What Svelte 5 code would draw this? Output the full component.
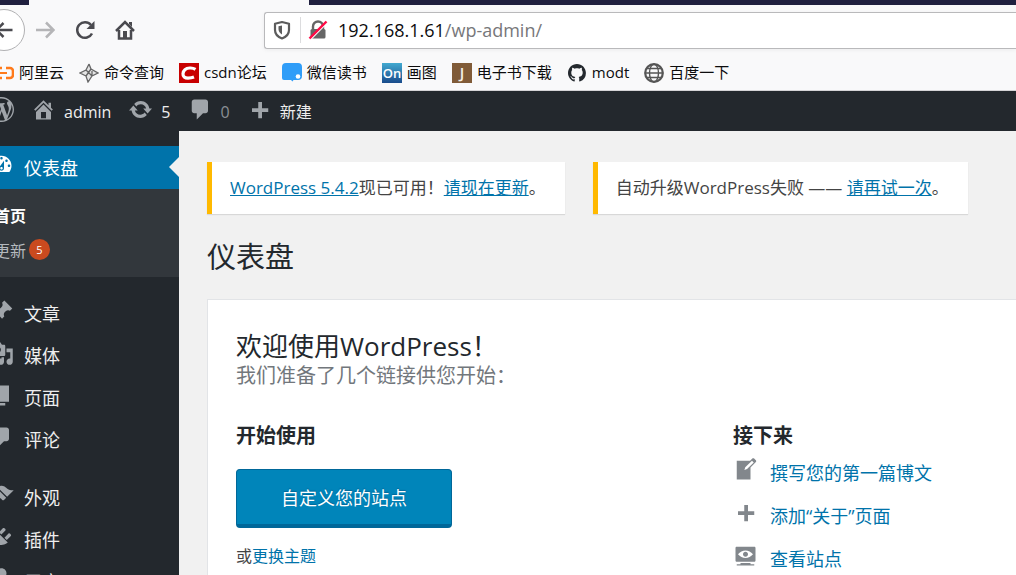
<script>
  const icons = {
    wordpress: 'M20 10c0-5.51-4.49-10-10-10C4.48 0 0 4.49 0 10c0 5.52 4.48 10 10 10 5.51 0 10-4.48 10-10zM7.78 15.37L4.37 6.22c.55-.02 1.17-.08 1.17-.08.5-.06.44-1.13-.06-1.11 0 0-1.45.11-2.37.11-.18 0-.37 0-.58-.01C4.12 2.69 6.87 1.11 10 1.11c2.33 0 4.45.87 6.05 2.34-.68-.11-1.65.39-1.65 1.58 0 .74.45 1.36.9 2.1.35.61.55 1.36.55 2.46 0 1.49-1.4 5-1.4 5l-3.03-8.37c.54-.02.82-.17.82-.17.5-.05.44-1.25-.06-1.22 0 0-1.44.12-2.38.12-.87 0-2.33-.12-2.33-.12-.5-.03-.56 1.2-.06 1.22l.92.08 1.26 3.41zM17.41 10c.24-.64.74-1.87.43-4.25.7 1.29 1.05 2.71 1.05 4.25 0 3.29-1.73 6.24-4.4 7.78.97-2.59 1.94-5.2 2.92-7.78zM6.1 18.09C3.12 16.65 1.11 13.53 1.11 10c0-1.3.23-2.48.72-3.59C3.25 10.3 4.67 14.2 6.1 18.09zm4.03-6.63l2.58 6.98c-.86.29-1.76.45-2.71.45-.79 0-1.57-.11-2.29-.33.81-2.38 1.62-4.74 2.42-7.1z',
    home: 'M16 8.5l1.53 1.53-1.06 1.06L10 4.6l-6.47 6.49-1.06-1.06L10 2.5l4 4v-2h2v4zm-6-2.46l6 5.99V18H4v-5.97zM12 17v-5H8v5h4z',
    update: 'M10.2 3.28c3.53 0 6.43 2.61 6.92 6h2.08l-3.5 4-3.5-4h2.32c-.45-1.97-2.21-3.45-4.32-3.45-1.45 0-2.73.71-3.54 1.78L4.95 5.66C6.23 4.2 8.11 3.28 10.2 3.28zm-.4 13.44c-3.52 0-6.43-2.61-6.92-6H.8l3.5-4c1.17 1.33 2.33 2.67 3.5 4H5.48c.45 1.97 2.21 3.45 4.32 3.45 1.45 0 2.73-.71 3.54-1.78l1.71 1.95c-1.28 1.46-3.15 2.38-5.25 2.38z',
    comments: 'M5 2h9c1.1 0 2 .9 2 2v7c0 1.1-.9 2-2 2h-2l-5 5v-5H5c-1.1 0-2-.9-2-2V4c0-1.1.9-2 2-2z',
    plus: 'M17 9v3h-5v5H9v-5H4V9h5V4h3v5h5z',
    dashboard: 'M3.76 16h12.48c1.1-1.37 1.76-3.11 1.76-5 0-4.42-3.58-8-8-8s-8 3.58-8 8c0 1.89.66 3.63 1.76 5zM10 4c.55 0 1 .45 1 1s-.45 1-1 1-1-.45-1-1 .45-1 1-1zM6 6c.55 0 1 .45 1 1s-.45 1-1 1-1-.45-1-1 .45-1 1-1zm8 0c.55 0 1 .45 1 1s-.45 1-1 1-1-.45-1-1 .45-1 1-1zm-5.37 5.55L12 7v6c0 1.1-.9 2-2 2s-2-.9-2-2c0-.57.24-1.08.63-1.45zM4 10c.55 0 1 .45 1 1s-.45 1-1 1-1-.45-1-1 .45-1 1-1zm12 0c.55 0 1 .45 1 1s-.45 1-1 1-1-.45-1-1 .45-1 1-1zm-5 3c0-.55-.45-1-1-1s-1 .45-1 1 .45 1 1 1 1-.45 1-1z',
    post: 'M10.44 3.02l1.82-1.82 6.36 6.35-1.83 1.82c-1.05-.68-2.48-.57-3.41.36l-.75.75c-.92.93-1.04 2.35-.35 3.41l-1.83 1.82-2.41-2.41-2.8 2.79c-.42.42-3.38 2.71-3.8 2.29s1.86-3.39 2.28-3.81l2.79-2.79L4.1 9.36l1.83-1.82c1.05.69 2.48.57 3.4-.36l.75-.75c.93-.92 1.05-2.35.36-3.41z',
    media: 'M13 11V4c0-.55-.45-1-1-1h-1.67L9 1H5L3.67 3H2c-.55 0-1 .45-1 1v7c0 .55.45 1 1 1h10c.55 0 1-.45 1-1zM7 4.5c1.38 0 2.5 1.12 2.5 2.5S8.38 9.5 7 9.5 4.5 8.38 4.5 7 5.62 4.5 7 4.5zM14 6h5v10.5c0 1.38-1.12 2.5-2.5 2.5S14 17.88 14 16.5s1.12-2.5 2.5-2.5c.17 0 .34.02.5.05V9h-3V6zm-4 8.05V13h2v3.5c0 1.38-1.12 2.5-2.5 2.5S7 17.88 7 16.5 8.12 14 9.5 14c.17 0 .34.02.5.05z',
    page: 'M6 15V2h10v13H6zm-1 1h8v2H3V5h2v11z',
    appearance: 'M14.48 11.06L7.41 3.99l1.5-1.5c.5-.56 2.3-.47 3.51.32 1.21.8 1.43 1.28 2.91 2.1 1.18.64 2.45 1.26 4.45.85zm-.71.71L6.7 4.7 4.93 6.47c-.39.39-.39 1.02 0 1.41l1.06 1.06c.39.39.39 1.03 0 1.42-.6.6-1.43 1.11-2.21 1.69-.35.26-.7.53-1.01.84C1.43 14.23.4 16.08 1.4 17.07c.99 1 2.84-.03 4.18-1.36.31-.31.58-.66.85-1.02.57-.78 1.08-1.61 1.69-2.21.39-.39 1.02-.39 1.41 0l1.06 1.06c.39.39 1.02.39 1.41 0z',
    plugins: 'M13.11 4.36L9.87 7.6 8 5.73l3.24-3.24c.35-.34 1.05-.2 1.56.32.52.51.66 1.21.31 1.55zm-8 1.77l.91-1.12 9.01 9.01-1.19.84c-.71.71-2.63 1.16-3.82 1.16H6.14L4.9 17.26c-.59.59-1.54.59-2.12 0-.59-.58-.59-1.53 0-2.12l1.24-1.24v-3.88c0-1.13.4-3.19 1.09-3.89zm7.26 3.97l3.24-3.24c.34-.35 1.04-.21 1.55.31.52.51.66 1.21.31 1.55l-3.24 3.25z',
    users: 'M10 9c2.2 0 4-1.8 4-4s-1.800-4-4-4-4 1.800-4 4 1.800 4 4 4zm4 1c2.500 0 4 2 4 4v4H2v-4c0-2 1.500-4 4-4z',
    write: 'M16.89 1.2l1.41 1.41c.39.39.39 1.02 0 1.41L14 8.33V18H3V3h10.67l1.8-1.8c.4-.39 1.03-.4 1.42 0zm-5.66 8.48l5.37-5.36-1.42-1.42-5.36 5.37-.71 2.12z',
    view: 'M18 14V4c0-.55-.45-1-1-1H3c-.55 0-1 .45-1 1v10c0 .55.45 1 1 1h14c.55 0 1-.45 1-1zm-8-8c2.3 0 4.4 1.14 6 3-1.6 1.86-3.7 3-6 3s-4.4-1.14-6-3c1.6-1.86 3.7-3 6-3zm2 3c0-1.1-.9-2-2-2s-2 .9-2 2 .9 2 2 2 2-.9 2-2zm2 8h3v1H3v-1h3v-1h8v1z'
  };

  const bookmarks = [
    { kind: 'aliyun', label: '阿里云' },
    { kind: 'spark', label: '命令查询' },
    { kind: 'csdn', label: 'csdn论坛' },
    { kind: 'weread', label: '微信读书' },
    { kind: 'on', label: '画图' },
    { kind: 'j', label: '电子书下载' },
    { kind: 'github', label: 'modt' },
    { kind: 'globe', label: '百度一下' }
  ];

  const menuGroups = [
    [
      { icon: 'post', label: '文章' },
      { icon: 'media', label: '媒体' },
      { icon: 'page', label: '页面' },
      { icon: 'comments', label: '评论' }
    ],
    [
      { icon: 'appearance', label: '外观' },
      { icon: 'plugins', label: '插件' },
      { icon: 'users', label: '用户' }
    ]
  ];

  const nextSteps = [
    { icon: 'write', label: '撰写您的第一篇博文' },
    { icon: 'plus', label: '添加“关于”页面' },
    { icon: 'view', label: '查看站点' }
  ];
</script>

{#snippet dashicon(name)}
  <svg class="dashicon" viewBox="0 0 20 20" aria-hidden="true"><path d={icons[name]} fill="currentColor" fill-rule={name === 'view' || name === 'media' || name === 'dashboard' ? 'evenodd' : 'nonzero'} /></svg>
{/snippet}

{#snippet favicon(kind)}
  <svg class="favicon" viewBox="0 0 20 20" aria-hidden="true">
    {#if kind === 'aliyun'}
      <path d="M8 5H4a3 3 0 0 0-3 3v4a3 3 0 0 0 3 3h4M12 5h4a3 3 0 0 1 3 3v4a3 3 0 0 1-3 3h-4" fill="none" stroke="#ff7a1a" stroke-width="2.600" />
      <path d="M6 10h7" stroke="#ff7a1a" stroke-width="2" />
    {:else if kind === 'spark'}
      <path d="M10 1l3 6 6 3-6 3-3 6-2-6-7-3 7-3z" fill="#e4e4e4" />
      <path d="M10 1L7 7l-6 3 6 3M10 1l2 5 7 4-6 3-4 6-2-6M7 7l6 6M12 6l-5 7M13 13V8" fill="none" stroke="#666" stroke-width="1.300" />
    {:else if kind === 'csdn'}
      <path d="M0 0h20v20H0z" fill="#c80000" />
      <path d="M16.500 6.300Q14 4.800 10.800 5C7 5.200 4.400 7.500 4 10.600c-.3 3 1.800 4.500 5 4.500q3.500 0 6-1" fill="none" stroke="#fff" stroke-width="3.200" />
    {:else if kind === 'weread'}
      <path d="M4 0h12a4 4 0 0 1 4 4v9a4 4 0 0 1-4 4h-4.500L10.500 18.500 9 17H2a2 2 0 0 1-2-2V4a4 4 0 0 1 4-4z" fill="#2f9df8" />
      <circle cx="16" cy="13.500" r="2.300" fill="#fff" />
    {:else if kind === 'on'}
      <defs><linearGradient id="on-bg" x2="0" y2="1"><stop stop-color="#42a9d0" /><stop offset="1" stop-color="#1a4c8c" /></linearGradient></defs>
      <path d="M0 0h20v20H0z" fill="url(#on-bg)" />
      <text x="10" y="15" text-anchor="middle" font-size="13" font-weight="600" fill="#fff">On</text>
    {:else if kind === 'j'}
      <path d="M0 0h20v20H0z" fill="#805b38" />
      <text x="10" y="15" text-anchor="middle" font-size="15" font-weight="600" fill="#f5f0ea">J</text>
    {:else if kind === 'github'}
      <path transform="translate(1 1) scale(1.12)" fill="#24292e" d="M8 0C3.58 0 0 3.58 0 8c0 3.54 2.29 6.53 5.47 7.59.4.07.55-.17.55-.38 0-.19-.01-.82-.01-1.49-2.01.37-2.53-.49-2.69-.94-.09-.23-.48-.94-.82-1.13-.28-.15-.68-.52-.01-.53.63-.01 1.08.58 1.23.82.72 1.21 1.87.87 2.33.66.07-.52.28-.87.51-1.07-1.78-.2-3.64-.89-3.64-3.95 0-.87.31-1.59.82-2.15-.08-.2-.36-1.02.08-2.12 0 0 .67-.21 2.2.82.64-.18 1.32-.27 2-.27s1.36.09 2 .27c1.53-1.04 2.2-.82 2.2-.82.44 1.1.16 1.92.08 2.12.51.56.82 1.27.82 2.15 0 3.07-1.87 3.75-3.65 3.95.29.25.54.73.54 1.48 0 1.07-.01 1.93-.01 2.2 0 .21.15.46.55.38A8.01 8.01 0 0 0 16 8c0-4.42-3.58-8-8-8z" />
    {:else}
      <g fill="none" stroke="#555"><circle cx="10" cy="10" r="8.800" stroke-width="2.200" /><ellipse cx="10" cy="10" rx="4.500" ry="8.800" stroke-width="1.400" /><path d="M2 10h16M3 5.500h14M3 14.500h14" stroke-width="1.300" /></g>
    {/if}
  </svg>
{/snippet}

<div class="viewport">
  <div class="shell">
    <header class="browser">
      <div class="tabs"><div class="tab"></div></div>
      <div class="toolbar">
        <button class="back" aria-label="后退">
          <svg viewBox="0 0 20 20"><path d="M18.500 10H2.500M9.500 3l-7 7 7 7" /></svg>
        </button>
        <button class="tool faded" aria-label="前进">
          <svg viewBox="0 0 20 20"><path d="M1 10h17M11 2.500l7.500 7.500-7.500 7.500" /></svg>
        </button>
        <button class="tool" aria-label="刷新">
          <svg viewBox="0 0 20 20"><path d="M17 13.500A7.800 7.800 0 1 1 16 5" /><path d="M19.500 1v8h-8z" class="solid" /></svg>
        </button>
        <button class="tool" aria-label="主页">
          <svg viewBox="0 0 20 20"><path d="M1 11l9-9 9 9" /><path d="M4 10v8.500h12V10" /><path d="M8 11h4v8H8zM14 2h3v5l-3-3z" class="solid" /></svg>
        </button>
        <label class="address">
          <svg class="shield" viewBox="0 0 20 20"><path d="M10 2L17 3.800V10c0 4-3 7-7 8.500C6 17 3 14 3 10V3.800z" fill="none" stroke="#5c5c5c" stroke-width="2.200" stroke-linejoin="round" /><path d="M10 5.500v9C7.500 13 6.500 11 6.500 9V6.300z" fill="#5c5c5c" /></svg>
          <span class="rule"></span>
          <svg class="lock" viewBox="0 0 20 20"><path d="M5 9V6.500a5 5 0 0 1 10 0V9" fill="none" stroke="#666" stroke-width="2.400" /><rect x="2.500" y="9" width="15" height="9.500" rx="1.500" fill="#666" /><path d="M2.500 19.500L19.500 2.500" stroke="#fff" stroke-width="1.500" /><path d="M1.500 18.500L18.500 1.500" stroke="#ff0a45" stroke-width="2.400" /></svg>
          <span class="url">192.168.1.61<span class="path">/wp-admin/</span></span>
        </label>
      </div>
      <nav class="bookmarks" aria-label="书签">
        {#each bookmarks as mark}
          <a href="#{mark.kind}">{@render favicon(mark.kind)}<span>{mark.label}</span></a>
        {/each}
      </nav>
    </header>

    <nav class="adminbar" aria-label="工具栏">
      <a class="logo" href="#about" aria-label="WordPress">{@render dashicon('wordpress')}</a>
      <a href="#site">{@render dashicon('home')}<span>admin</span></a>
      <a href="#updates">{@render dashicon('update')}<span>5</span></a>
      <a class="muted" href="#comments">{@render dashicon('comments')}<span>0</span></a>
      <a href="#new">{@render dashicon('plus')}<span>新建</span></a>
    </nav>

    <div class="body">
      <nav class="sidebar" aria-label="主菜单">
        <a class="item current" href="#dashboard">{@render dashicon('dashboard')}仪表盘</a>
        <div class="submenu">
          <a class="active" href="#home">首页</a>
          <a href="#update">更新<span class="badge">5</span></a>
        </div>
        {#each menuGroups as group}
          <div class="group">
            {#each group as entry}
              <a class="item" href="#{entry.icon}">{@render dashicon(entry.icon)}{entry.label}</a>
            {/each}
          </div>
        {/each}
      </nav>

      <main>
        <div class="notices">
          <p class="notice"><a href="#version">WordPress 5.4.2</a>现已可用！<a href="#upgrade">请现在更新</a>。</p>
          <p class="notice">自动升级WordPress失败 —— <a href="#retry">请再试一次</a>。</p>
        </div>
        <h1>仪表盘</h1>
        <section class="panel">
          <h2>欢迎使用WordPress！</h2>
          <p class="about">我们准备了几个链接供您开始：</p>
          <div class="columns">
            <div class="start">
              <h3>开始使用</h3>
              <button class="primary">自定义您的站点</button>
              <p class="theme">或<a href="#themes">更换主题</a></p>
            </div>
            <div>
              <h3>接下来</h3>
              <ul>
                {#each nextSteps as step}
                  <li><a href="#{step.icon}">{@render dashicon(step.icon)}{step.label}</a></li>
                {/each}
              </ul>
            </div>
          </div>
        </section>
      </main>
    </div>
  </div>
</div>

<style>
  :global(body) {
    background: #f1f1f1;
  }
  .viewport {
    height: 100vh;
    overflow: hidden;
    font-family: 'Open Sans', 'Noto Sans CJK SC', sans-serif;
    color: #444;
  }
  .shell {
    margin-left: -21px;
    min-height: 100%;
    display: flex;
    flex-direction: column;
  }
  a {
    color: #0073aa;
    text-decoration: none;
  }
  h1, h2, h3, p, ul {
    margin: 0;
    padding: 0;
  }
  button {
    font-family: inherit;
    border: 0;
    padding: 0;
    background: none;
  }
  .dashicon {
    width: 25px;
    height: 25px;
    flex: none;
  }

  .browser {
    background: #f9f9fa;
    border-bottom: 1px solid #d4d4d6;
    color: #0c0c0d;
  }
  .tabs {
    height: 5px;
    background: #20203f;
    padding-left: 50px;
  }
  .tab {
    width: 280px;
    height: 5px;
    background: #f9f9fa;
  }
  .toolbar {
    display: flex;
    align-items: center;
    gap: 20px;
    height: 50px;
    padding-left: 4px;
  }
  .toolbar button svg {
    display: block;
    width: 20px;
    height: 20px;
    fill: none;
    stroke: #4a4a4f;
    stroke-width: 2.5;
  }
  .toolbar .solid {
    fill: #4a4a4f;
    stroke: none;
  }
  .back {
    box-sizing: border-box;
    width: 42px;
    height: 42px;
    margin-right: -10px;
    border: 1px solid #b1b1b3;
    border-radius: 50%;
    background: #fff;
    display: grid;
    place-items: center;
  }
  .toolbar .faded svg {
    stroke: #b5b5b7;
  }
  .address {
    flex: 1;
    box-sizing: border-box;
    display: flex;
    align-items: center;
    height: 37px;
    margin-left: 109px;
    padding-left: 7px;
    border: 1px solid #b9b9bb;
    border-right: 0;
    border-radius: 3px 0 0 3px;
    background: #fff;
    box-shadow: 0 1px 4px rgba(0, 0, 0, 0.06);
  }
  .shield, .lock {
    width: 20px;
    height: 20px;
  }
  .rule {
    width: 1px;
    height: 26px;
    margin: 0 7px 0 8px;
    background: #dcdcde;
  }
  .url {
    margin-left: 10px;
    font-size: 18px;
    color: #0c0c0d;
  }
  .path {
    color: #77777a;
  }
  .bookmarks {
    display: flex;
    align-items: center;
    gap: 15px;
    height: 35px;
    padding-left: 15px;
  }
  .bookmarks a {
    display: flex;
    align-items: center;
    gap: 5px;
    font-size: 15px;
    line-height: 20px;
    white-space: nowrap;
    color: #0c0c0d;
  }
  .bookmarks span {
    margin-bottom: 2px;
  }
  .favicon {
    width: 20px;
    height: 20px;
  }

  .adminbar {
    display: flex;
    height: 40px;
    padding-left: 10px;
    gap: 17px;
    background: #23282d;
  }
  .adminbar a {
    display: flex;
    align-items: center;
    gap: 8px;
    font-size: 16px;
    color: #eee;
  }
  .adminbar .dashicon {
    color: #a0a5aa;
    margin-bottom: 4px;
  }
  .adminbar span {
    line-height: 20px;
    margin-top: 2px;
  }
  .adminbar .muted {
    color: #8a8f94;
  }

  .body {
    flex: 1;
    display: flex;
  }
  .sidebar {
    flex: none;
    width: 200px;
    padding-top: 15px;
    background: #23282d;
  }
  .item {
    box-sizing: border-box;
    display: flex;
    align-items: center;
    gap: 10px;
    height: 42px;
    padding: 0 0 2px 10px;
    font-size: 18px;
    color: #eee;
  }
  .item .dashicon {
    color: #a0a5aa;
    margin-bottom: 4px;
  }
  .current {
    position: relative;
    height: 43px;
    background: #0073aa;
    color: #fff;
  }
  .current .dashicon {
    color: #fff;
  }
  .current::after {
    content: '';
    position: absolute;
    right: 0;
    top: 11px;
    border: 10px solid transparent;
    border-left: 0;
    border-right-color: #f1f1f1;
  }
  .submenu {
    display: flex;
    flex-direction: column;
    padding: 8px 0 10px 15px;
    background: #32373c;
  }
  .submenu a {
    display: flex;
    align-items: center;
    gap: 3px;
    height: 35px;
    font-size: 16px;
    color: #b4b9be;
  }
  .submenu .active {
    color: #fff;
    font-weight: 600;
  }
  .badge {
    width: 21px;
    height: 21px;
    border-radius: 50%;
    background: #ca4a1f;
    color: #fff;
    font-size: 11px;
    line-height: 21px;
    text-align: center;
  }
  .group {
    margin-top: 16px;
  }

  main {
    flex: 1;
    min-width: 0;
    padding: 31px 0 0 28px;
  }
  .notices {
    display: flex;
    gap: 28px;
  }
  .notice {
    padding: 13px 19px 13px 18px;
    border-left: 5px solid #ffb900;
    background: #fff;
    box-shadow: 0 1px 1px rgba(0, 0, 0, 0.1);
    font-size: 17px;
    line-height: 26px;
    white-space: nowrap;
  }
  .notice a {
    text-decoration: underline;
  }
  h1 {
    margin-top: 24px;
    font-size: 29px;
    line-height: 38px;
    font-weight: 400;
    color: #23282d;
  }
  .panel {
    margin-top: 23px;
    padding: 30px 28px;
    border: 1px solid #e2e4e7;
    border-right: 0;
    background: #fff;
  }
  h2 {
    font-size: 26px;
    line-height: 32px;
    font-weight: 400;
    color: #23282d;
  }
  .about {
    font-size: 20px;
    line-height: 28px;
    color: #72777c;
  }
  .columns {
    display: flex;
    margin-top: 32px;
  }
  .start {
    flex: 0 0 497px;
  }
  h3 {
    font-size: 20px;
    line-height: 28px;
    font-weight: 700;
    color: #23282d;
  }
  .primary {
    display: block;
    height: 59px;
    margin-top: 19px;
    padding: 0 44px;
    border: 1px solid #006799;
    border-bottom-width: 4px;
    border-radius: 4px;
    background: #0085ba;
    color: #fff;
    font-size: 18px;
    text-shadow: 0 -1px 1px #006799;
  }
  .theme {
    margin-top: 16px;
    font-size: 16px;
    line-height: 24px;
  }
  ul {
    margin-top: 1px;
    list-style: none;
  }
  li a {
    box-sizing: border-box;
    display: flex;
    align-items: center;
    gap: 12px;
    height: 43px;
    padding-bottom: 2px;
    font-size: 18px;
    white-space: nowrap;
  }
  li .dashicon {
    color: #82878c;
    margin-bottom: 4px;
  }
</style>
